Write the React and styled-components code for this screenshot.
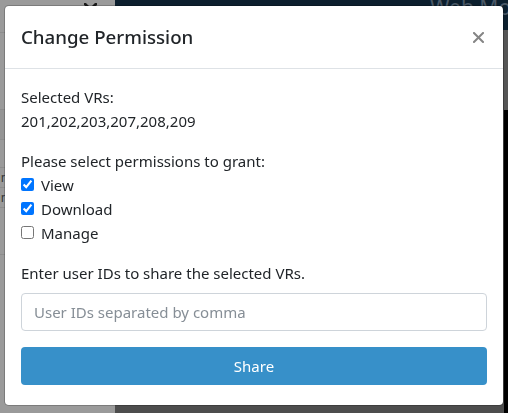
import React from "react";
import styled, { createGlobalStyle } from "styled-components";

const GlobalStyle = createGlobalStyle`
  html, body { margin: 0; padding: 0; }
  body {
    width: 508px;
    height: 413px;
    overflow: hidden;
    font-family: "Noto Sans", "Liberation Sans", sans-serif;
    color: #212529;
  }
  * { box-sizing: border-box; }
`;

const Page = styled.div`
  display: flex;
  width: 508px;
  height: 413px;
  overflow: hidden;
`;

const Sidebar = styled.div`
  flex: none;
  width: 115px;
  background: #9a9a9a;
  display: flex;
  flex-direction: column;
`;

const SideRow = styled.div`
  height: ${(p) => p.$h}px;
  border-bottom: 1px solid #8d8d8d;
  background: ${(p) => (p.$dark ? "#949494" : "transparent")};
  font: 12px "Liberation Sans", sans-serif;
  color: #333;
  display: flex;
  align-items: center;
  padding-left: 1px;
`;

const SideIcon = styled.div`
  height: 33px;
  display: flex;
  justify-content: flex-end;
  padding: 3px 18px 0 0;
  border-bottom: 1px solid #8d8d8d;
`;

const Main = styled.div`
  flex: 1;
  min-width: 0;
  display: flex;
  flex-direction: column;
  background: #4d4d4d;
`;

const TopBar = styled.div`
  height: 30px;
  background: #0c1f2e;
  display: flex;
  justify-content: flex-start;
  align-items: flex-start;
  overflow: hidden;
  padding-left: 315px;
`;

const TopTitle = styled.div`
  font: 21px "Noto Sans", sans-serif;
  color: #4a5866;
  margin-top: -7px;
  white-space: nowrap;
`;

const MainBody = styled.div`
  flex: 1;
  display: flex;
  justify-content: flex-end;
`;

const RightStrip = styled.div`
  width: 4px;
  display: flex;
  flex-direction: column;
`;

const StripTop = styled.div`
  height: 80px;
  background: #555;
`;

const StripBottom = styled.div`
  flex: 1;
  background: #000;
`;

const Overlay = styled.div`
  position: fixed;
  inset: 0;
  display: flex;
  justify-content: center;
  align-items: flex-start;
  padding-top: 5px;
`;

const Modal = styled.div`
  width: 500px;
  background: #fff;
  border: 1px solid rgba(0, 0, 0, 0.2);
  border-radius: 4.8px;
  background-clip: padding-box;
  display: flex;
  flex-direction: column;
`;

const Header = styled.div`
  display: flex;
  align-items: center;
  padding: 16px;
  border-bottom: 1px solid #dee2e6;
`;

const Title = styled.h5`
  margin: 0;
  font-size: 18.7px;
  font-weight: 500;
  line-height: 30px;
  flex: 1;
`;

const CloseButton = styled.button`
  background: none;
  border: 0;
  padding: 0;
  margin-right: 3px;
  display: flex;
  cursor: pointer;
`;

const Body = styled.div`
  padding: 16px 16px 20px;
  font-size: 15px;
  line-height: 24px;
`;

const Para = styled.p`
  margin: 0 0 16px;
`;

const CheckRow = styled.label`
  display: flex;
  align-items: flex-start;
`;

const Check = styled.input`
  width: 13px;
  height: 13px;
  margin: 5px 7px 0 0;
  flex: none;
`;

const FieldLabel = styled.div`
  margin-bottom: 8px;
`;

const TextInput = styled.input`
  display: block;
  width: 100%;
  height: 38px;
  padding: 6px 12px;
  font: inherit;
  font-size: 15px;
  color: #495057;
  border: 1px solid #ced4da;
  border-radius: 4px;
  outline: none;
  &::placeholder {
    color: #868e96;
  }
`;

const ShareButton = styled.button`
  display: block;
  width: 100%;
  height: 38px;
  margin-top: 16px;
  background: #3790c9;
  color: #fff;
  border: 0;
  border-radius: 4px;
  font: inherit;
  font-size: 15px;
`;

const XIcon = ({ size, color, width }) => (
  <svg width={size} height={size} viewBox="0 0 11 11">
    <path d="M1 1 L10 10 M10 1 L1 10" stroke={color} strokeWidth={width} strokeLinecap="square" />
  </svg>
);

export default function App() {
  return (
    <>
      <GlobalStyle />
      <Page>
        <Sidebar>
          <SideIcon>
            <XIcon size={13} color="#1a1a1a" width={2.4} />
          </SideIcon>
          <SideRow $h={77} />
          <SideRow $h={30} $dark />
          <SideRow $h={28} />
          <SideRow $h={20}>r</SideRow>
          <SideRow $h={20}>r</SideRow>
          <SideRow $h={47} />
        </Sidebar>
        <Main>
          <TopBar>
            <TopTitle>Web Monitor</TopTitle>
          </TopBar>
          <MainBody>
            <RightStrip>
              <StripTop />
              <StripBottom />
            </RightStrip>
          </MainBody>
        </Main>
      </Page>
      <Overlay>
        <Modal>
          <Header>
            <Title>Change Permission</Title>
            <CloseButton aria-label="Close">
              <XIcon size={11} color="#858585" width={2} />
            </CloseButton>
          </Header>
          <Body>
            <div>Selected VRs:</div>
            <Para>201,202,203,207,208,209</Para>
            <div>Please select permissions to grant:</div>
            <CheckRow>
              <Check type="checkbox" defaultChecked />
              View
            </CheckRow>
            <CheckRow>
              <Check type="checkbox" defaultChecked />
              Download
            </CheckRow>
            <Para as={CheckRow}>
              <Check type="checkbox" />
              Manage
            </Para>
            <FieldLabel>Enter user IDs to share the selected VRs.</FieldLabel>
            <TextInput placeholder="User IDs separated by comma" />
            <ShareButton>Share</ShareButton>
          </Body>
        </Modal>
      </Overlay>
    </>
  );
}
